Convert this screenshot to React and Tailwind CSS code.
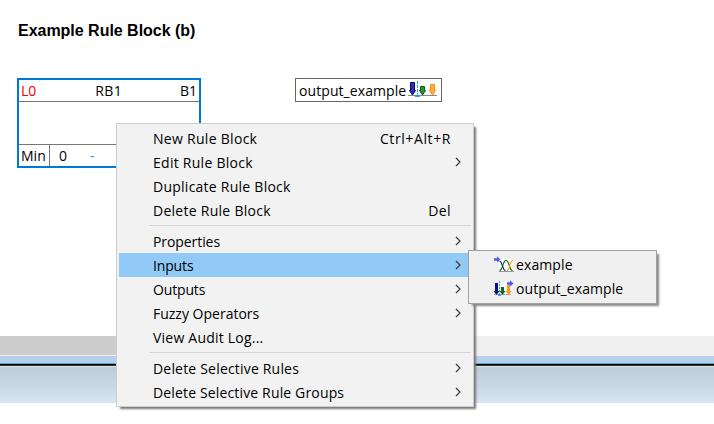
import React from "react";

const MENU = [
  [
    { label: "New Rule Block", hint: "Ctrl+Alt+R", track: "tracking-[0.29px]" },
    { label: "Edit Rule Block", sub: true, track: "tracking-[0.27px]" },
    { label: "Duplicate Rule Block", track: "tracking-[0.25px]" },
    { label: "Delete Rule Block", hint: "Del", track: "tracking-[0.27px]" },
  ],
  [
    { label: "Properties", sub: true, track: "tracking-[-0.08px]" },
    { label: "Inputs", sub: true, active: true, track: "tracking-[-0.15px]" },
    { label: "Outputs", sub: true, track: "tracking-[-0.15px]" },
    { label: "Fuzzy Operators", sub: true, track: "tracking-normal" },
    { label: "View Audit Log...", track: "tracking-[0.22px]" },
  ],
  [
    { label: "Delete Selective Rules", sub: true, track: "tracking-[0.19px]" },
    { label: "Delete Selective Rule Groups", sub: true, track: "tracking-[0.15px]" },
  ],
];

function Chevron() {
  return (
    <svg className="mr-[10px] h-[10px] w-[6px]" viewBox="0 0 6 10" fill="none" stroke="#3c3c3c" strokeWidth="1.2">
      <path d="M1 1 5 5 1 9" />
    </svg>
  );
}

function OutputIcon() {
  return (
    <svg className="h-4 w-[30px] overflow-visible" viewBox="0 0 30 16">
      <path d="M0 13.5H29" stroke="#888" />
      <path d="M9.500 -1V13" stroke="#3399ff" strokeDasharray="3 1" />
      <rect x="7" y="13" width="5" height="2" fill="#3399ff" />
      <path d="M2.500 .5h4v8h1L4.500 13 1.500 8.500h1z" fill="#30309f" stroke="#000080" />
      <path d="M12.500 4.500h4v4h1l-3 4.500-3-4.500h1z" fill="#388a42" stroke="#006400" />
      <path d="M22.500 2.500h4v6h1l-3 4.500-3-4.500h1z" fill="#ffb04d" stroke="#ff8c00" />
    </svg>
  );
}

function BlueArrow({ x }) {
  return (
    <path
      transform={`translate(${x} 0)`}
      d="M0 1.300h3V-.7L6.500 2.500 3 5.500V3.700H0z"
      fill="#5058f0"
    />
  );
}

function InputVarIcon() {
  return (
    <svg className="h-4 w-5 overflow-visible" viewBox="0 0 20 16">
      <rect x="5" y="2" width="14" height="12" fill="#fff" />
      <path d="M5 14.500H20" stroke="#999" />
      <g fill="none" strokeWidth="1.1">
        <path d="M5.500 4C8.500 4.500 8.500 13.500 11.500 13.500" stroke="#000080" />
        <path d="M5.500 13.500C9 13.500 8.500 3.500 12 3.500S15 13.500 18.500 13.500" stroke="#006400" />
        <path d="M13 13.500C16 13.500 15.500 3.500 19 3.500" stroke="#ff8c00" />
      </g>
      <BlueArrow x={0} />
    </svg>
  );
}

function OutputVarIcon() {
  return (
    <svg className="h-4 w-5 overflow-visible" viewBox="0 0 20 16">
      <rect x="5" y="1" width="9" height="12" fill="#fff" />
      <path d="M5.500 0V13" stroke="#3399ff" strokeDasharray="2 1" />
      <path d="M0 13.500H17" stroke="#aaa" />
      <rect x="4" y="13" width="3" height="2" fill="#3399ff" />
      <path d="M1 2h3v8h1.500L2.500 14-.5 10H1z" fill="#10107c" />
      <path d="M7 6h3v4h1.500l-3 4-3-4H7z" fill="#106c18" />
      <path d="M13 4h3v6h1.500l-3 4-3-4H13z" fill="#ff9428" />
      <BlueArrow x={13} />
    </svg>
  );
}

function MenuRow({ item }) {
  return (
    <div className={`flex h-6 items-center pl-[34px] ${item.active ? "bg-[#91c9f7]" : ""}`}>
      <span className={`grow pt-[2px] ${item.track}`}>{item.label}</span>
      {item.hint && (
        <span className={`mr-5 pt-[2px] ${item.hint === "Del" ? "tracking-[0.4px]" : "tracking-[0.6px]"}`}>
          {item.hint}
        </span>
      )}
      {item.sub && <Chevron />}
    </div>
  );
}

export default function App() {
  return (
    <div className="relative flex h-[424px] w-[714px] flex-col overflow-hidden bg-white font-['Open_Sans',sans-serif] text-[14px] leading-5 whitespace-nowrap text-black">
      <div className="flex h-[336px] flex-col">
        <h1 className="mt-[21px] ml-[18px] h-[57px] font-['Liberation_Sans',sans-serif] text-[16px] font-bold tracking-[-0.02px]">
          Example Rule Block (b)
        </h1>
        <div className="flex items-start pl-[17px]">
          <div className="flex h-[90px] w-[184px] flex-col border-2 border-[#0078d7]">
            <div className="flex h-[22px] items-center justify-between border-b border-[#777] px-[2px]">
              <span className="text-[#f00000]">L0</span>
              <span className="ml-px tracking-[0.4px]">RB1</span>
              <span>B1</span>
            </div>
            <div className="h-[43px] border-b border-[#777]" />
            <div className="flex grow items-center">
              <span className="flex h-full w-[31px] items-center border-r border-[#777] pt-px pl-[2px]">Min</span>
              <span className="ml-[9px] w-[31px] pt-px">0</span>
              <span className="pt-px text-[#408fb8]">-</span>
            </div>
          </div>
          <div className="ml-[94px] flex h-6 w-[147px] items-center border border-[#666] pl-[3px]">
            <span className="w-[109px] pt-[2px] tracking-[0.08px]">output_example</span>
            <OutputIcon />
          </div>
        </div>
      </div>
      <div className="flex h-5">
        <div className="h-5 w-[300px] border-b border-[#f0f0f0] bg-[#cdcdcd]" />
        <div className="h-5 grow bg-[#f0f0f0]" />
      </div>
      <div className="h-[7px] bg-[#b9cfe9]" />
      <div className="h-px bg-[#42b5cf]" />
      <div className="h-px bg-black" />
      <div className="h-px bg-[#333]" />
      <div className="h-px bg-[#e4e4e4]" />
      <div className="h-9 bg-linear-to-b from-[#bfccd9] via-[#c8d5e2] to-[#d8e5f3]" />

      <div className="absolute top-[123px] left-[116px] w-[358px] border border-[#ccc] bg-[#f2f2f2] p-[2px] shadow-[3px_3px_2px_-1px_#777]">
        {MENU.map((group, i) => (
          <React.Fragment key={i}>
            {i > 0 && (
              <div className="flex h-[7px] pt-[3px] pl-[30px]">
                <div className="h-px grow bg-[#d7d7d7]" />
              </div>
            )}
            {group.map((item) => (
              <MenuRow key={item.label} item={item} />
            ))}
          </React.Fragment>
        ))}
      </div>

      <div className="absolute top-[250px] left-[468px] w-[189px] border border-[#a0a0a0] bg-[#f0f0f0] p-[2px] shadow-[3px_3px_2px_-1px_#888]">
        <div className="flex h-6 items-center pl-[23px]">
          <InputVarIcon />
          <span className="ml-[2px] tracking-[0.1px]">example</span>
        </div>
        <div className="flex h-6 items-center pl-[23px]">
          <OutputVarIcon />
          <span className="ml-[2px] tracking-[0.08px]">output_example</span>
        </div>
      </div>
    </div>
  );
}
